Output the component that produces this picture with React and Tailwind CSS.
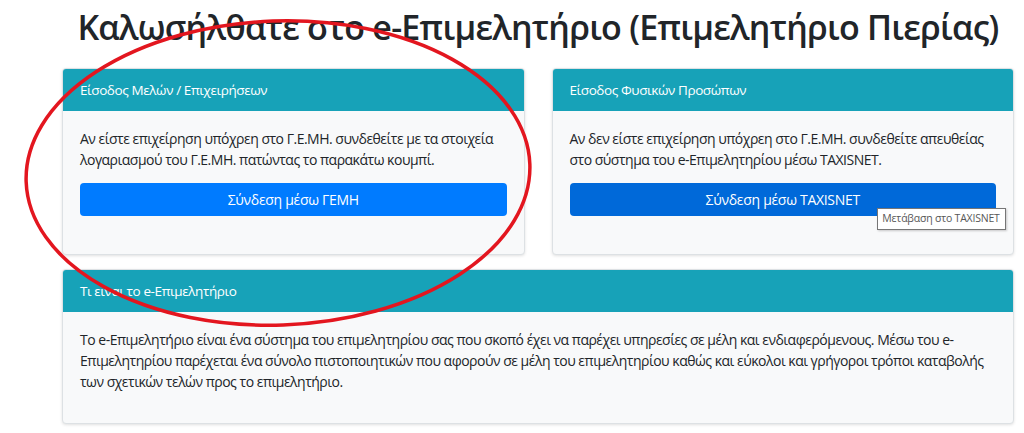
import React from "react";

const font = { fontFamily: '"Open Sans", "Noto Sans", sans-serif' };

function Card({ title, children, className = "" }) {
  return (
    <div className={"relative rounded-[4px] border border-[#dde1e4] bg-[#f8f9fa] shadow-[0_1px_3px_rgba(0,0,0,0.12)] " + className}>
      <div className="flex h-[42px] items-center rounded-t-[3px] bg-[#17a2b8] px-[17px] text-[13.5px] tracking-[-0.4px] text-white">
        {title}
      </div>
      {children}
    </div>
  );
}

export default function App() {
  return (
    <div className="relative h-[433px] w-full overflow-hidden bg-white text-[#212529]" style={font}>
      <div className="pl-[62px] pr-[10px]">
        <h1 className="pt-[6px] text-center text-[34px] leading-[42px] font-semibold tracking-[-0.75px] text-[#212529]">
          Καλωσήλθατε στο e-Επιμελητήριο (Επιμελητήριο Πιερίας)
        </h1>
        <div className="mt-[20px] grid grid-cols-2 gap-[27px]">
          <Card title="Είσοδος Μελών / Επιχειρήσεων">
            <div className="px-[17px] pt-[17px] pb-[38px]">
              <p className="mb-[13px] text-[14px] leading-[21px] tracking-[-0.5px]">
                Αν είστε επιχείρηση υπόχρεη στο Γ.Ε.ΜΗ. συνδεθείτε με τα στοιχεία λογαριασμού του Γ.Ε.ΜΗ. πατώντας το παρακάτω κουμπί.
              </p>
              <button className="flex h-[33px] w-full items-center justify-center rounded-[4px] bg-[#007bff] text-[14px] tracking-[-0.3px] text-white">
                Σύνδεση μέσω ΓΕΜΗ
              </button>
            </div>
          </Card>
          <Card title="Είσοδος Φυσικών Προσώπων">
            <div className="px-[17px] pt-[17px] pb-[38px]">
              <p className="mb-[13px] text-[14px] leading-[21px] tracking-[-0.5px]">
                Αν δεν είστε επιχείρηση υπόχρεη στο Γ.Ε.ΜΗ. συνδεθείτε απευθείας στο σύστημα του e-Επιμελητηρίου μέσω TAXISNET.
              </p>
              <button className="flex h-[33px] w-full items-center justify-center rounded-[4px] bg-[#0069d9] text-[14px] tracking-[-0.3px] text-white">
                Σύνδεση μέσω TAXISNET
              </button>
            </div>
            <div className="absolute left-[324px] top-[139px] flex h-[22px] w-[129px] items-center justify-center whitespace-nowrap border border-[#767676] bg-white text-[10.5px] tracking-[-0.2px] text-[#575757] shadow-[1px_1px_2px_rgba(0,0,0,0.2)]">
              Μετάβαση στο TAXISNET
            </div>
          </Card>
        </div>
        <Card title="Τι ειναι το e-Επιμελητήριο" className="mt-[14px]">
          <div className="px-[17px] pt-[17px] pb-[31px]">
            <p className="text-[14px] leading-[21px] tracking-[-0.5px]">
              Το e-Επιμελητήριο είναι ένα σύστημα του επιμελητηρίου σας που σκοπό έχει να παρέχει υπηρεσίες σε μέλη και ενδιαφερόμενους. Μέσω του e-Επιμελητηρίου παρέχεται ένα σύνολο πιστοποιητικών που αφορούν σε μέλη του επιμελητηρίου καθώς και εύκολοι και γρήγοροι τρόποι καταβολής των σχετικών τελών προς το επιμελητήριο.
            </p>
          </div>
        </Card>
      </div>
      <svg className="pointer-events-none absolute left-0 top-0" width="1024" height="433" viewBox="0 0 1024 433">
        <ellipse cx="278" cy="173" rx="252" ry="152" fill="none" stroke="#e3161f" strokeWidth="3.5" transform="rotate(-2 278 173)" />
      </svg>
    </div>
  );
}
